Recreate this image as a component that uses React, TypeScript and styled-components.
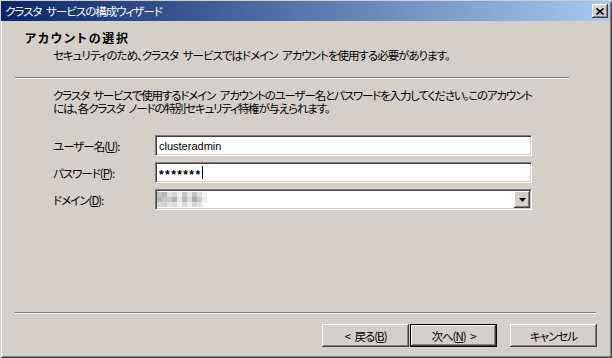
import React from "react";
import styled, { createGlobalStyle } from "styled-components";

const Global = createGlobalStyle`
  html, body { margin: 0; padding: 0; background: #d4d0c8; }
  body {
    font-family: "Noto Sans CJK JP", "Liberation Sans", sans-serif;
    font-size: 12px;
    color: #000;
  }
`;

const Window = styled.div`
  width: 612px;
  height: 358px;
  box-sizing: border-box;
  background: #d4d0c8;
  display: flex;
  flex-direction: column;
  box-shadow: inset 1px 1px #d4d0c8, inset -1px -1px #404040,
    inset 2px 2px #ffffff, inset -2px -2px #808080;
  font-feature-settings: "palt";
  font-size: 11.5px;
  letter-spacing: -1px;
  word-spacing: 3px;
`;

const TitleBar = styled.div`
  height: 20px;
  margin: 1px 2px 0 1px;
  padding: 0 2px 0 4px;
  display: flex;
  align-items: center;
  justify-content: space-between;
  background: linear-gradient(to right, #0a246a, #a6caf0);
  color: #fff;
  line-height: 12px;
`;

const CloseBox = styled.div`
  width: 16px;
  height: 14px;
  box-sizing: border-box;
  background: #d4d0c8;
  display: flex;
  align-items: center;
  justify-content: center;
  box-shadow: inset -1px -1px #404040, inset 1px 1px #ffffff,
    inset -2px -2px #808080;
`;

const Header = styled.div`
  padding: 10px 0 0 25px;
`;

const HeaderTitle = styled.div`
  font-weight: 700;
  font-size: 12px;
  letter-spacing: 1.8px;
  line-height: 13px;
`;

const HeaderSub = styled.div`
  margin: 5px 0 0 28px;
  line-height: 12px;
  white-space: nowrap;
`;

const Separator = styled.div<{ $top: number; $left: number; $right: number }>`
  margin: ${(p) => p.$top}px ${(p) => p.$right}px 0 ${(p) => p.$left}px;
  border-top: 1px solid #808080;
  border-bottom: 1px solid #ffffff;
`;

const Para = styled.p`
  margin: 10px 0 0 53px;
  line-height: 13px;
  letter-spacing: -1.15px;
  white-space: nowrap;
`;

const Form = styled.div`
  margin: 20px 0 0 53px;
  display: flex;
  flex-direction: column;
  gap: 6px;
`;

const Row = styled.div`
  display: flex;
  align-items: center;
  height: 21px;
`;

const Label = styled.div`
  width: 102px;
  line-height: 12px;
  padding-top: 1px;
`;

const Field = styled.div`
  width: 377px;
  height: 21px;
  box-sizing: border-box;
  background: #fff;
  border-top: 1px solid #808080;
  border-left: 1px solid #808080;
  border-bottom: 1px solid #ffffff;
  border-right: 1px solid #ffffff;
  box-shadow: inset 1px 1px #404040, inset -1px -1px #d4d0c8;
  display: flex;
  align-items: center;
  padding: 0 1px 0 3px;
  font-family: "Liberation Sans", Arial, sans-serif;
  font-size: 11px;
  letter-spacing: 0;
  word-spacing: 0;
`;

const Stars = styled.span`
  font-size: 12px;
  letter-spacing: 1.4px;
  font-weight: 700;
  padding-top: 4px;
`;

const Caret = styled.span`
  display: inline-block;
  width: 1px;
  height: 13px;
  background: #000;
`;

const Mosaic = styled.div`
  display: grid;
  grid-template-columns: repeat(10, 5px);
  grid-auto-rows: 5px;
  margin-left: -2px;
`;

const Cell = styled.div<{ $c: string }>`
  background: ${(p) => p.$c};
`;

const DropButton = styled.div`
  margin-left: auto;
  width: 16px;
  height: 17px;
  box-sizing: border-box;
  background: #d4d0c8;
  display: flex;
  align-items: center;
  justify-content: center;
  box-shadow: inset -1px -1px #404040, inset 1px 1px #ffffff,
    inset -2px -2px #808080;
`;

const Footer = styled.div`
  margin-top: auto;
`;

const ButtonRow = styled.div`
  display: flex;
  justify-content: flex-end;
  padding: 10px 15px 11px 0;
`;

const Button = styled.div<{ $default?: boolean; $gap: number }>`
  width: 87px;
  height: 23px;
  box-sizing: border-box;
  margin-right: ${(p) => p.$gap}px;
  display: flex;
  align-items: center;
  justify-content: center;
  background: #d4d0c8;
  line-height: 12px;
  padding-top: 1px;
  white-space: pre;
  border: ${(p) => (p.$default ? "1px solid #000" : "none")};
  box-shadow: inset -1px -1px #404040, inset 1px 1px #ffffff,
    inset -2px -2px #808080;
`;

const U = styled.span`
  text-decoration: underline;
`;

const mosaic = [
  "#c4c4c4", "#b8b8b8", "#e2e2e2", "#d4d4d4", "#f0f0f0", "#c8c8c8", "#e8e8e8", "#c0c0c0", "#dcdcdc", "#f4f4f4",
  "#b4b4b4", "#c8c8c8", "#cccccc", "#b0b0b0", "#e4e4e4", "#b8b8b8", "#dadada", "#acacac", "#c8c8c8", "#ececec",
  "#d8d8d8", "#d0d0d0", "#e8e8e8", "#dcdcdc", "#f4f4f4", "#d8d8d8", "#f0f0f0", "#d4d4d4", "#e4e4e4", "#fafafa",
];

export default function App() {
  return (
    <>
      <Global />
      <Window>
        <TitleBar>
          <span>クラスタ サービスの構成ウィザード</span>
          <CloseBox>
            <svg width="8" height="7" viewBox="0 0 8 7">
              <path d="M0.5 0.5 L7.5 6.5 M7.5 0.5 L0.5 6.5" stroke="#000" strokeWidth="1.6" fill="none" />
            </svg>
          </CloseBox>
        </TitleBar>
        <Header>
          <HeaderTitle>アカウントの選択</HeaderTitle>
          <HeaderSub>セキュリティのため、クラスタ サービスではドメイン アカウントを使用する必要があります。</HeaderSub>
        </Header>
        <Separator $top={16} $left={15} $right={43} />
        <Para>
          クラスタ サービスで使用するドメイン アカウントのユーザー名とパスワードを入力してください。このアカウント
          <br />
          には、各クラスタ ノードの特別セキュリティ特権が与えられます。
        </Para>
        <Form>
          <Row>
            <Label>
              ユーザー名(<U>U</U>):
            </Label>
            <Field>clusteradmin</Field>
          </Row>
          <Row>
            <Label>
              パスワード(<U>P</U>):
            </Label>
            <Field>
              <Stars>*******</Stars>
              <Caret />
            </Field>
          </Row>
          <Row>
            <Label>
              ドメイン(<U>D</U>):
            </Label>
            <Field>
              <Mosaic>
                {mosaic.map((c, i) => (
                  <Cell key={i} $c={c} />
                ))}
              </Mosaic>
              <DropButton>
                <svg width="7" height="4" viewBox="0 0 7 4">
                  <polygon points="0,0 7,0 3.5,4" fill="#000" />
                </svg>
              </DropButton>
            </Field>
          </Row>
        </Form>
        <Footer>
          <Separator $top={0} $left={15} $right={16} />
          <ButtonRow>
            <Button $gap={1}>
              {"< 戻る("}<U>B</U>{")"}
            </Button>
            <Button $default $gap={13}>
              {"次へ("}<U>N</U>{") >"}
            </Button>
            <Button $gap={0}>キャンセル</Button>
          </ButtonRow>
        </Footer>
      </Window>
    </>
  );
}
